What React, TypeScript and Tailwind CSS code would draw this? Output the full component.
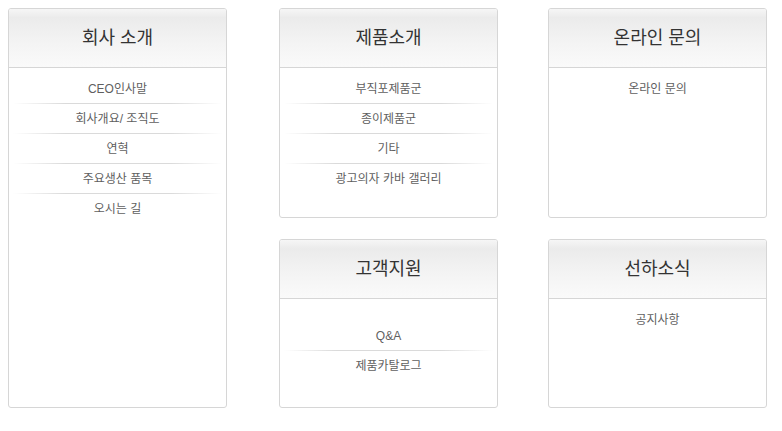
const font = { fontFamily: '"Liberation Sans", "Noto Sans CJK KR", sans-serif' };

interface BoxProps {
  title: string;
  items: string[];
  className?: string;
  listClass?: string;
}

const Box = ({ title, items, className = "", listClass = "pt-[6px]" }: BoxProps) => {
  return (
    <div
      className={`flex flex-col overflow-hidden rounded-[3px] border border-[#d6d6d6] bg-white ${className}`}
    >
      <div className="flex h-[59px] shrink-0 items-center justify-center border-b border-[#d6d6d6] bg-[linear-gradient(to_bottom,#f6f6f6_0%,#ebebeb_15%,#f4f4f4_60%,#fafafa_100%)]">
        <h3 className="text-[18px] text-[#333]">{title}</h3>
      </div>
      <ul className={`px-[4px] ${listClass}`}>
        {items.map((item, i) => (
          <li key={item}>
            {i > 0 && (
              <div className="h-px bg-[linear-gradient(to_right,transparent,#dadada_25%,#dadada_75%,transparent)]" />
            )}
            <div className="flex h-[29px] items-center justify-center text-[12px] text-[#5f5f5f]">
              {item}
            </div>
          </li>
        ))}
      </ul>
    </div>
  );
};

const App = () => {
  return (
    <div className="flex h-[431px] w-[782px] bg-white pl-2 pt-2" style={font}>
      <Box
        title="회사 소개"
        items={["CEO인사말", "회사개요/ 조직도", "연혁", "주요생산 품목", "오시는 길"]}
        className="h-[400px] w-[219px]"
      />
      <div className="ml-[52px] flex w-[219px] flex-col gap-[21px]">
        <Box
          title="제품소개"
          items={["부직포제품군", "종이제품군", "기타", "광고의자 카바 갤러리"]}
          className="h-[210px]"
        />
        <Box
          title="고객지원"
          items={["Q&A", "제품카탈로그"]}
          className="h-[169px]"
          listClass="pt-[22px]"
        />
      </div>
      <div className="ml-[50px] flex w-[219px] flex-col gap-[21px]">
        <Box title="온라인 문의" items={["온라인 문의"]} className="h-[210px]" />
        <Box title="선하소식" items={["공지사항"]} className="h-[169px]" />
      </div>
    </div>
  );
};

export default App;
